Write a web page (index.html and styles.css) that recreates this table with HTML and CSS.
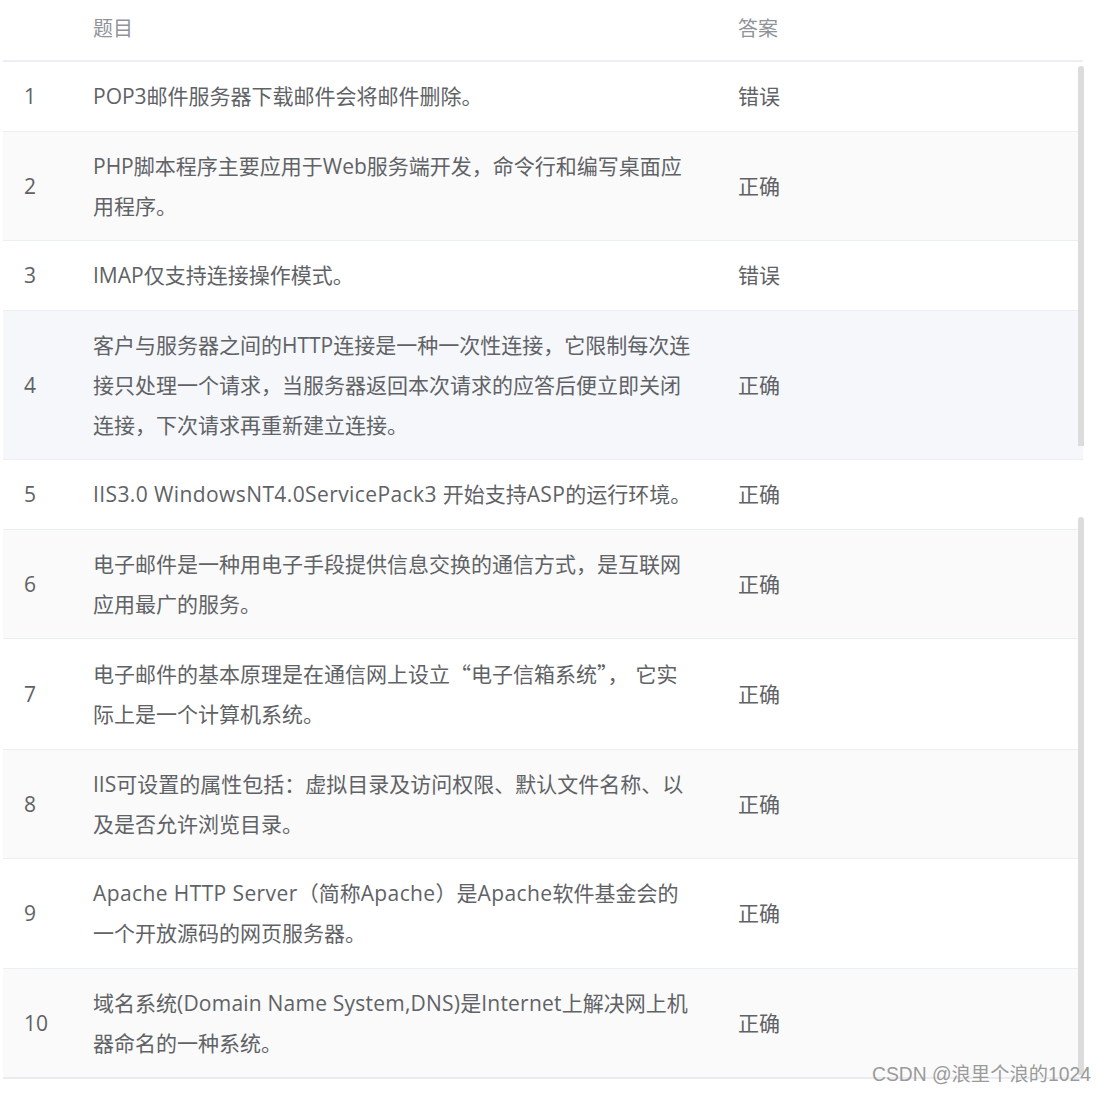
FILE: index.html
```html
<!DOCTYPE html>
<html lang="zh-CN">
<head>
<meta charset="utf-8">
<title>题目答案</title>
<link rel="stylesheet" href="styles.css">
</head>
<body>
<div class="page">
  <div class="table">
    <div class="row head">
      <div class="cell idx"></div>
      <div class="cell title">题目</div>
      <div class="cell ans">答案</div>
    </div>
    <div class="row">
      <div class="cell idx">1</div>
      <div class="cell title">POP3邮件服务器下载邮件会将邮件删除。</div>
      <div class="cell ans">错误</div>
    </div>
    <div class="row stripe">
      <div class="cell idx">2</div>
      <div class="cell title">PHP脚本程序主要应用于Web服务端开发，命令行和编写桌面应用程序。</div>
      <div class="cell ans">正确</div>
    </div>
    <div class="row">
      <div class="cell idx">3</div>
      <div class="cell title">IMAP仅支持连接操作模式。</div>
      <div class="cell ans">错误</div>
    </div>
    <div class="row hover">
      <div class="cell idx">4</div>
      <div class="cell title">客户与服务器之间的HTTP连接是一种一次性连接，它限制每次连接只处理一个请求，当服务器返回本次请求的应答后便立即关闭连接，下次请求再重新建立连接。</div>
      <div class="cell ans">正确</div>
    </div>
    <div class="row">
      <div class="cell idx">5</div>
      <div class="cell title"><span class="en">IIS3.0 WindowsNT4.0ServicePack3 </span>开始支持<span class="en">ASP</span>的运行环境。</div>
      <div class="cell ans">正确</div>
    </div>
    <div class="row stripe">
      <div class="cell idx">6</div>
      <div class="cell title">电子邮件是一种用电子手段提供信息交换的通信方式，是互联网应用最广的服务。</div>
      <div class="cell ans">正确</div>
    </div>
    <div class="row">
      <div class="cell idx">7</div>
      <div class="cell title">电子邮件的基本原理是在通信网上设立<span class="q-open">“</span>电子信箱系统<span class="q-close">”</span>，<span class="gap"></span>它实际上是一个计算机系统。</div>
      <div class="cell ans">正确</div>
    </div>
    <div class="row stripe">
      <div class="cell idx">8</div>
      <div class="cell title">IIS可设置的属性包括：虚拟目录及访问权限、默认文件名称、以及是否允许浏览目录。</div>
      <div class="cell ans">正确</div>
    </div>
    <div class="row">
      <div class="cell idx">9</div>
      <div class="cell title"><span class="en">Apache HTTP Server</span>（简称<span class="en">Apache</span>）是<span class="en">Apache</span>软件基金会的一个开放源码的网页服务器。</div>
      <div class="cell ans">正确</div>
    </div>
    <div class="row stripe last">
      <div class="cell idx">10</div>
      <div class="cell title">域名系统<span class="en-s">(Domain Name System,DNS)</span>是<span class="en-s">Internet</span>上解决网上机器命名的一种系统。</div>
      <div class="cell ans">正确</div>
    </div>
    <div class="scrollbar bar-a"></div>
    <div class="scrollbar bar-b"></div>
  </div>
  <div class="watermark">CSDN @浪里个浪的1024</div>
</div>
</body>
</html>
```

FILE: styles.css
```css
html, body {
  margin: 0;
  padding: 0;
  background: #ffffff;
}

.page {
  position: relative;
  width: 1107px;
  height: 1094px;
  overflow: hidden;
  font-family: "Open Sans", "Noto Sans CJK SC", sans-serif;
  color: #606266;
}

.table {
  position: relative;
  margin-left: 3px;
  width: 1080px;
}

.row {
  display: grid;
  grid-template-columns: 90px 645px 1fr;
  border-bottom: 1px solid #ebeef5;
  padding: 14px 0 14.5px;
  font-size: 21px;
  line-height: 40px;
  align-items: center;
}

.row.head {
  padding: 9px 0 11px;
  border-bottom: 2px solid #ebeef5;
  color: #909399;
  font-size: 20px;
}

.row.stripe {
  background: #fafafa;
}

.row.hover {
  background: #f5f7fa;
}

.row.last {
  border-bottom: 2px solid #e8ebf0;
}

.cell.idx {
  padding-left: 21px;
}

.cell.title {
  padding-right: 45px;
}

.en {
  letter-spacing: 0.4px;
}

.en-s {
  letter-spacing: 0.22px;
}

.q-open,
.q-close {
  font-family: "Noto Sans CJK SC", sans-serif;
}

.gap {
  display: inline-block;
  width: 7px;
}

.scrollbar {
  position: absolute;
  right: -1px;
  width: 6px;
  background: #dcdcdc;
  border-radius: 3px 3px 0 0;
}

.bar-a {
  top: 66px;
  height: 380px;
}

.bar-b {
  top: 517px;
  height: 558px;
}

.watermark {
  position: absolute;
  left: 872px;
  top: 1062px;
  font-family: "Liberation Sans", "Noto Sans CJK SC", sans-serif;
  font-size: 19.3px;
  line-height: 26px;
  color: #9a9a9a;
}
```
